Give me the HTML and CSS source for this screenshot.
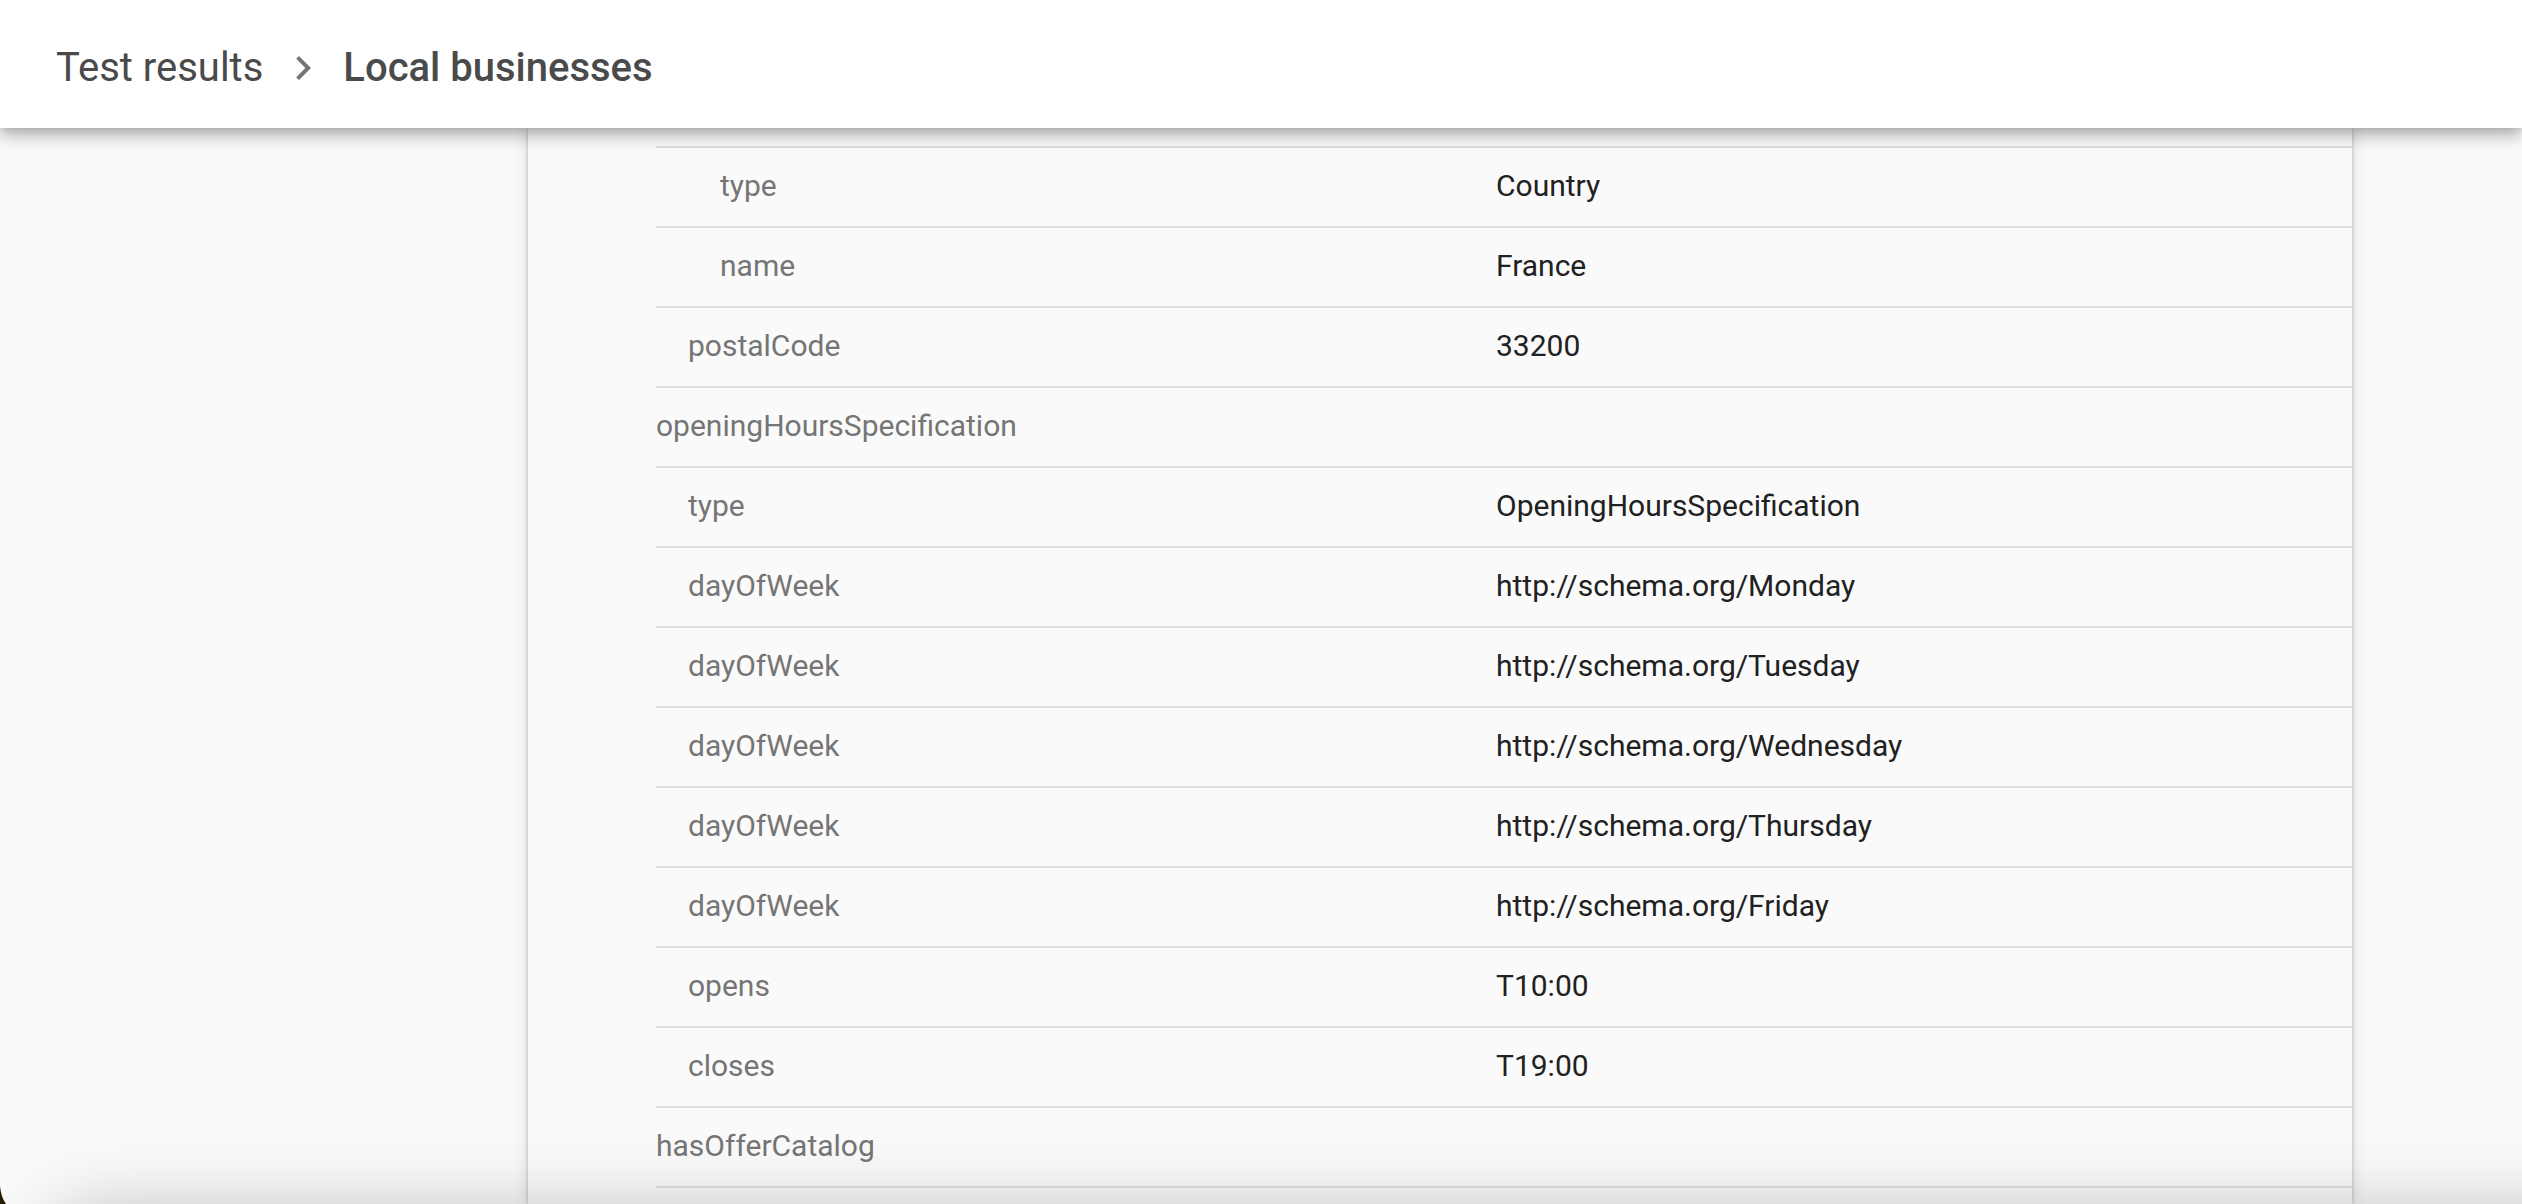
FILE: index.html
```html
<!DOCTYPE html>
<html lang="en">
<head>
<meta charset="utf-8">
<title>Test results - Local businesses</title>
<link rel="stylesheet" href="styles.css">
</head>
<body>
<header class="topbar">
  <nav class="breadcrumb" aria-label="Breadcrumb">
    <a class="crumb" href="#">Test results</a>
    <svg class="chevron" viewBox="0 0 24 24" aria-hidden="true"><path d="M10 6L8.59 7.41 13.17 12l-4.58 4.59L10 18l6-6z"/></svg>
    <span class="crumb crumb-current" aria-current="page">Local businesses</span>
  </nav>
</header>
<main class="content">
  <section class="card">
    <table class="properties">
      <tbody>
        <tr><th class="level-2" scope="row">type</th><td>Country</td></tr>
        <tr><th class="level-2" scope="row">name</th><td>France</td></tr>
        <tr><th class="level-1" scope="row">postalCode</th><td>33200</td></tr>
        <tr><th scope="row">openingHoursSpecification</th><td></td></tr>
        <tr><th class="level-1" scope="row">type</th><td>OpeningHoursSpecification</td></tr>
        <tr><th class="level-1" scope="row">dayOfWeek</th><td>http://schema.org/Monday</td></tr>
        <tr><th class="level-1" scope="row">dayOfWeek</th><td>http://schema.org/Tuesday</td></tr>
        <tr><th class="level-1" scope="row">dayOfWeek</th><td>http://schema.org/Wednesday</td></tr>
        <tr><th class="level-1" scope="row">dayOfWeek</th><td>http://schema.org/Thursday</td></tr>
        <tr><th class="level-1" scope="row">dayOfWeek</th><td>http://schema.org/Friday</td></tr>
        <tr><th class="level-1" scope="row">opens</th><td>T10:00</td></tr>
        <tr><th class="level-1" scope="row">closes</th><td>T19:00</td></tr>
        <tr><th scope="row">hasOfferCatalog</th><td></td></tr>
      </tbody>
    </table>
  </section>
</main>
<div class="bottom-shade"></div>
<svg class="corner" viewBox="0 0 6 18" aria-hidden="true"><path d="M0 0Q1 11 6 18H0z"/></svg>
</body>
</html>
```
FILE: styles.css
```css
* {
  box-sizing: border-box;
}

body {
  display: flex;
  flex-direction: column;
  min-height: 100vh;
  margin: 0;
  overflow: hidden;
  background: #fafafa;
  font-family: Roboto, "Liberation Sans", sans-serif;
}

.topbar {
  position: relative;
  z-index: 1;
  padding: 44px 56px 36px;
  background: #fff;
  box-shadow: 0 0 8px rgba(0, 0, 0, 0.14), 0 8px 16px rgba(0, 0, 0, 0.28);
}

.breadcrumb {
  display: flex;
  align-items: center;
  gap: 16px;
  height: 48px;
}

.crumb {
  color: #4a4a4a;
  font-size: 40px;
  line-height: 48px;
  text-decoration: none;
}

.crumb-current {
  font-weight: 500;
}

.chevron {
  width: 48px;
  height: 48px;
  fill: #757575;
}

.content {
  display: flex;
  flex: 1;
  padding: 0 170px 0 528px;
}

.card {
  flex: 1;
  padding: 18px 0 0 128px;
  background: #fafafa;
  box-shadow: 0 0 4px rgba(0, 0, 0, 0.24), 0 0 16px rgba(0, 0, 0, 0.12);
}

.properties {
  width: 100%;
  border-collapse: separate;
  border-spacing: 0;
  border-bottom: 2px solid #e0e0e0;
  table-layout: fixed;
  font-size: 30px;
  line-height: 38px;
}

.properties th,
.properties td {
  height: 80px;
  padding: 0 0 2px;
  border-top: 2px solid #e0e0e0;
  text-align: left;
}

.properties th {
  width: 840px;
  color: #757575;
  font-weight: 400;
}

.properties td {
  color: #212121;
}

.properties .level-1 {
  padding-left: 32px;
}

.properties .level-2 {
  padding-left: 64px;
}

.bottom-shade {
  position: fixed;
  z-index: 2;
  top: calc(100% + 15px);
  right: -200px;
  left: 60px;
  height: 200px;
  box-shadow: 0 0 80px rgba(0, 0, 0, 0.3);
}

.corner {
  position: fixed;
  z-index: 3;
  bottom: 0;
  left: 0;
  width: 6px;
  height: 18px;
  fill: #2a1d0a;
}
```
